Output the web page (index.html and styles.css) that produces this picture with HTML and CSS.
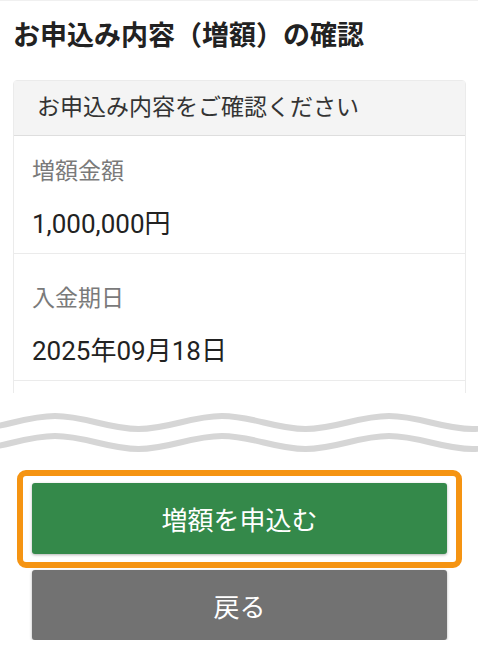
FILE: index.html
```html
<!DOCTYPE html>
<html lang="ja">
<head>
    <meta charset="UTF-8">
    <meta name="viewport" content="width=device-width, initial-scale=1.0">
    <title>お申込み内容（増額）の確認</title>
    <link rel="stylesheet" href="styles.css">
</head>
<body>
    <div class="page">
        <h1 class="page-title">お申込み内容（増額）の確認</h1>

        <div class="card-clip">
            <div class="card">
                <div class="card-header">お申込み内容をご確認ください</div>
                <div class="card-row">
                    <div class="row-label">増額金額</div>
                    <div class="row-value">1,000,000円</div>
                </div>
                <div class="card-row">
                    <div class="row-label">入金期日</div>
                    <div class="row-value">2025年09月18日</div>
                </div>
                <div class="card-row">
                    <div class="row-label">&nbsp;</div>
                </div>
            </div>
        </div>
    </div>

    <!-- 省略を表す波線 -->
    <svg class="wave-break" width="478" height="67" viewBox="0 0 478 67">
        <path class="wave-line" d="M -70.25 29.5 C -34.85 38.17 -22.15 38.17 13.25 29.5 S 61.35 20.83 96.75 29.5 S 144.85 38.17 180.25 29.5 S 228.35 20.83 263.75 29.5 S 311.85 38.17 347.25 29.5 S 395.35 20.83 430.75 29.5 S 478.85 38.17 514.25 29.5"/>
        <path class="wave-line" transform="translate(0 20)" d="M -70.25 29.5 C -34.85 38.17 -22.15 38.17 13.25 29.5 S 61.35 20.83 96.75 29.5 S 144.85 38.17 180.25 29.5 S 228.35 20.83 263.75 29.5 S 311.85 38.17 347.25 29.5 S 395.35 20.83 430.75 29.5 S 478.85 38.17 514.25 29.5"/>
    </svg>

    <div class="actions">
        <div class="primary-wrap">
            <button class="btn btn-primary">増額を申込む</button>
            <span class="highlight"></span>
        </div>
        <button class="btn btn-back">戻る</button>
    </div>
</body>
</html>
```

FILE: styles.css
```css
body {
    margin: 0;
    background-color: #fff;
    font-family: Roboto, "Noto Sans CJK JP", sans-serif;
    color: #222;
}
.page {
    padding: 0 12px 0 13px;
    border-top: 1px solid #f0f0f0;
}
.page-title {
    margin: 0;
    padding-top: 17px;
    font-size: 27px;
    line-height: 36px;
    font-weight: 700;
    color: #222;
}
.card-clip {
    margin-top: 26px;
    height: 313px;
    overflow: hidden;
}
.card {
    border: 1px solid #ebebeb;
    border-radius: 4px 4px 0 0;
}
.card-header {
    height: 54px;
    line-height: 54px;
    padding: 0 23px;
    background-color: #f4f4f4;
    border-bottom: 1px solid #dedede;
    font-size: 23px;
    color: #333;
}
.card-row {
    padding: 29px 18px 11px;
    border-bottom: 1px solid #ebebeb;
}
.card-header + .card-row {
    padding-top: 20px;
}
.row-label {
    font-size: 23px;
    line-height: 31px;
    color: #7a7a7a;
}
.row-value {
    margin-top: 19px;
    font-size: 26px;
    line-height: 36px;
    color: #222;
}
.wave-break {
    display: block;
}
.wave-line {
    fill: none;
    stroke: #d6d6d6;
    stroke-width: 6;
}
.actions {
    margin-top: 23px;
    padding: 0 31px 0 32px;
}
.primary-wrap {
    position: relative;
}
.btn {
    display: block;
    width: 100%;
    border: none;
    border-radius: 3px;
    font-family: Roboto, "Noto Sans CJK JP", sans-serif;
    font-size: 26px;
    color: #fff;
    cursor: pointer;
    box-shadow: 0 1px 3px rgba(0,0,0,0.3);
}
.btn-primary {
    height: 71px;
    background-color: #34894a;
}
.btn-back {
    height: 70px;
    margin-top: 16px;
    background-color: #727272;
}
/* 強調枠 */
.highlight {
    position: absolute;
    top: -13px;
    left: -15px;
    right: -15px;
    bottom: -14px;
    border: 6px solid #f59412;
    border-radius: 9px;
    pointer-events: none;
}
```
